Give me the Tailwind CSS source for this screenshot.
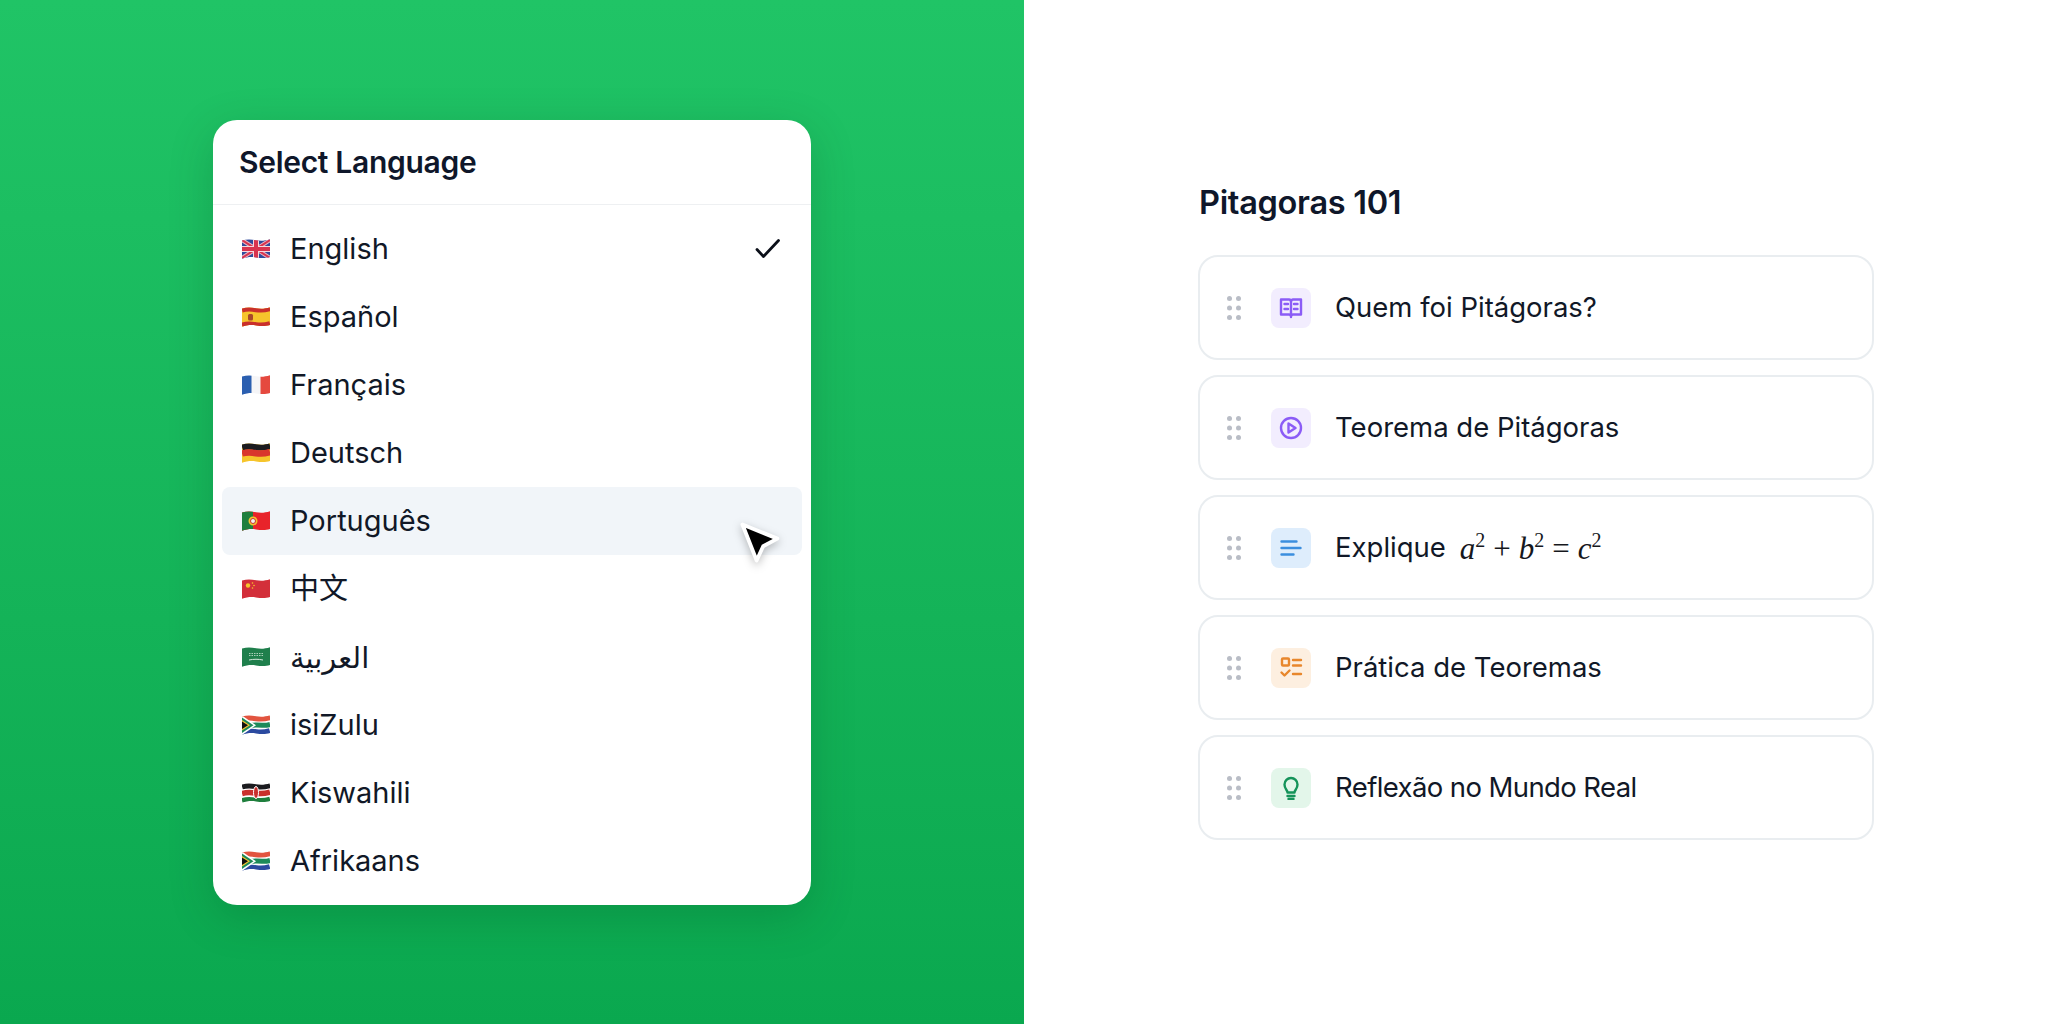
<!DOCTYPE html>
<html lang="en">
<head>
    <meta charset="UTF-8">
    <title>Select Language / Pitagoras 101</title>
    <script src="https://cdn.jsdelivr.net/npm/@tailwindcss/browser@4"></script>
</head>
<body class="bg-white font-['Inter','Noto_Sans_CJK_SC','Noto_Sans',sans-serif] text-[#111827]">

    <!-- shared flag shapes -->
    <svg class="block w-0 h-0" aria-hidden="true">
        <defs>
            <clipPath id="wave"><path d="M0 1.500C5 0 9 .3 14 1.200s9 .5 14-1V18c-5 1.500-9 1-14 .4s-9-.3-14 1.400Z"/></clipPath>
            <symbol id="flag-za" viewBox="0 0 28 20">
                <g clip-path="url(#wave)">
                    <rect width="28" height="20" fill="#fff"/>
                    <path d="M0 3C5 1.500 9 1.800 14 2.700S23 3.200 28 1.700" stroke="#e2543f" stroke-width="7" fill="none"/>
                    <path d="M0 18C5 16.500 9 16.800 14 17.700S23 18.200 28 16.700" stroke="#2b4aa0" stroke-width="7" fill="none"/>
                    <path d="M8 10.500C12 9.800 16 9.800 20 10.200S25 10.200 28 9.500" stroke="#1d8a5a" stroke-width="5" fill="none"/>
                    <path d="M0 .5 14 10.300 0 20Z" fill="#fff"/>
                    <path d="M0 2.500 11.500 10.300 0 18Z" fill="#1d8a5a"/>
                    <path d="M0 5 8 10.300 0 15.500Z" fill="#f4c430"/>
                    <path d="M0 6.500 6 10.300 0 14Z" fill="#111"/>
                </g>
            </symbol>
        </defs>
    </svg>

    <div class="flex h-[1024px] w-[2048px] overflow-hidden">

        <!-- left panel -->
        <section class="flex w-[1024px] items-center justify-center bg-gradient-to-b from-[#20c466] to-[#0aa84f]">
            <div class="relative w-[598px] rounded-[24px] bg-white shadow-[0_12px_44px_rgba(0,70,30,0.22)]">
                <header class="flex h-[85px] items-center border-b border-[#eef0f2] pl-[26px] pt-[1px]">
                    <h1 class="text-[30px] font-semibold tracking-[-0.3px] text-[#0f172a]">Select Language</h1>
                </header>
                <ul class="px-[9px] py-[10px]">
                    <li class="flex h-[68px] items-center gap-[20px] rounded-lg px-[20px] text-[29px] text-[#111827]">
                        <svg class="w-[28px] h-[20px] shrink-0" viewBox="0 0 28 20"><g clip-path="url(#wave)">
                            <rect width="28" height="20" fill="#2f4a9b"/>
                            <path d="M0 1 28 19M28 1 0 19" stroke="#e8b4c0" stroke-width="4"/>
                            <path d="M0 1 28 19M28 1 0 19" stroke="#d8344f" stroke-width="2"/>
                            <path d="M14 0V20M0 10H28" stroke="#f4d8de" stroke-width="6"/>
                            <path d="M14 0V20M0 10H28" stroke="#d8344f" stroke-width="4"/>
                        </g></svg>
                        <span class="flex-1">English</span>
                        <svg class="mr-[1px] w-[28px] h-[22px]" viewBox="0 0 28 22" fill="none" stroke="#0b0f19" stroke-width="2.800" stroke-linecap="round" stroke-linejoin="round"><path d="M4 11.500 10.500 18.500 25.500 2.500"/></svg>
                    </li>
                    <li class="flex h-[68px] items-center gap-[20px] rounded-lg px-[20px] text-[29px] text-[#111827]">
                        <svg class="w-[28px] h-[20px] shrink-0" viewBox="0 0 28 20"><g clip-path="url(#wave)">
                            <rect width="28" height="20" fill="#f6c52c"/>
                            <path d="M0 3C5 1.500 9 1.800 14 2.700S23 3.200 28 1.700" stroke="#c9302c" stroke-width="5" fill="none"/>
                            <path d="M0 18C5 16.500 9 16.800 14 17.700S23 18.200 28 16.700" stroke="#c9302c" stroke-width="5" fill="none"/>
                            <rect x="6" y="7" width="5" height="6.500" rx="1.500" fill="#a8482a"/>
                        </g></svg>
                        <span>Español</span>
                    </li>
                    <li class="flex h-[68px] items-center gap-[20px] rounded-lg px-[20px] text-[29px] text-[#111827]">
                        <svg class="w-[28px] h-[20px] shrink-0" viewBox="0 0 28 20"><g clip-path="url(#wave)">
                            <rect width="28" height="20" fill="#f5f5f7"/>
                            <rect width="9.500" height="20" fill="#2b5fb0"/>
                            <rect x="18.500" width="9.500" height="20" fill="#e5493f"/>
                        </g></svg>
                        <span>Français</span>
                    </li>
                    <li class="flex h-[68px] items-center gap-[20px] rounded-lg px-[20px] text-[29px] text-[#111827]">
                        <svg class="w-[28px] h-[20px] shrink-0" viewBox="0 0 28 20"><g clip-path="url(#wave)">
                            <rect width="28" height="20" fill="#f6c52c"/>
                            <path d="M0 4C5 2.500 9 2.800 14 3.700S23 4.200 28 2.700" stroke="#1b1b1f" stroke-width="7" fill="none"/>
                            <path d="M0 10.500C5 9 9 9.300 14 10.200S23 10.700 28 9.200" stroke="#d9352c" stroke-width="6.500" fill="none"/>
                        </g></svg>
                        <span>Deutsch</span>
                    </li>
                    <li class="flex h-[68px] items-center gap-[20px] rounded-lg bg-[#f1f5f9] px-[20px] text-[29px] text-[#111827]">
                        <svg class="w-[28px] h-[20px] shrink-0" viewBox="0 0 28 20"><g clip-path="url(#wave)">
                            <rect width="28" height="20" fill="#e8232a"/>
                            <rect width="11" height="20" fill="#1f7f3d"/>
                            <circle cx="11" cy="10" r="4.500" fill="#f2c230"/>
                            <circle cx="11" cy="10" r="2.500" fill="#f4f4f4" stroke="#c9302c"/>
                        </g></svg>
                        <span>Português</span>
                    </li>
                    <li class="flex h-[68px] items-center gap-[20px] rounded-lg px-[20px] text-[29px] text-[#111827]">
                        <svg class="w-[28px] h-[20px] shrink-0" viewBox="0 0 28 20"><g clip-path="url(#wave)">
                            <rect width="28" height="20" fill="#d32f3a"/>
                            <circle cx="6" cy="6.500" r="2.200" fill="#f6c52c"/>
                            <circle cx="10.500" cy="4" r=".8" fill="#f6c52c"/>
                            <circle cx="12" cy="6.500" r=".8" fill="#f6c52c"/>
                            <circle cx="10.500" cy="9" r=".8" fill="#f6c52c"/>
                        </g></svg>
                        <span>中文</span>
                    </li>
                    <li class="flex h-[68px] items-center gap-[20px] rounded-lg px-[20px] text-[29px] text-[#111827]">
                        <svg class="w-[28px] h-[20px] shrink-0" viewBox="0 0 28 20"><g clip-path="url(#wave)">
                            <rect width="28" height="20" fill="#1f7f4c"/>
                            <path d="M7 6.500h14M7 8.500h14" stroke="#a9d0b8" stroke-width="1.200" stroke-dasharray="1.500 1"/>
                            <path d="M7 13c5-1 9-1 14 0" stroke="#d5e8dc" stroke-width="1" fill="none"/>
                        </g></svg>
                        <span class="font-['Noto_Sans','DejaVu_Sans',sans-serif]">العربية</span>
                    </li>
                    <li class="flex h-[68px] items-center gap-[20px] rounded-lg px-[20px] text-[29px] text-[#111827]">
                        <svg class="w-[28px] h-[20px] shrink-0"><use href="#flag-za"/></svg>
                        <span>isiZulu</span>
                    </li>
                    <li class="flex h-[68px] items-center gap-[20px] rounded-lg px-[20px] text-[29px] text-[#111827]">
                        <svg class="w-[28px] h-[20px] shrink-0" viewBox="0 0 28 20"><g clip-path="url(#wave)">
                            <rect width="28" height="20" fill="#fff"/>
                            <path d="M0 3.500C5 2 9 2.300 14 3.200S23 3.700 28 2.200" stroke="#1b1b1f" stroke-width="6" fill="none"/>
                            <path d="M0 10.500C5 9 9 9.300 14 10.200S23 10.700 28 9.200" stroke="#c9302c" stroke-width="5.500" fill="none"/>
                            <path d="M0 17.500C5 16 9 16.300 14 17.200S23 17.700 28 16.200" stroke="#1f7f3d" stroke-width="5" fill="none"/>
                            <ellipse cx="14" cy="9.500" rx="2.500" ry="6" fill="#c9302c" stroke="#fff"/>
                        </g></svg>
                        <span>Kiswahili</span>
                    </li>
                    <li class="flex h-[68px] items-center gap-[20px] rounded-lg px-[20px] text-[29px] text-[#111827]">
                        <svg class="w-[28px] h-[20px] shrink-0"><use href="#flag-za"/></svg>
                        <span>Afrikaans</span>
                    </li>
                </ul>

                <!-- pointer over the hovered row -->
                <svg class="absolute left-[524px] top-[399px] w-[48px] h-[48px] drop-shadow-[0_3px_4px_rgba(0,0,0,0.25)]" viewBox="0 0 44 44">
                    <path d="M5 5 37 18 24 25 18 38Z" fill="#000" stroke="#fff" stroke-width="3.500" stroke-linejoin="round"/>
                </svg>
            </div>
        </section>

        <!-- right panel -->
        <section class="flex w-[1024px] items-center justify-center bg-white">
            <div class="w-[676px]">
                <h2 class="mb-[34px] ml-[1px] h-[36px] text-[32.500px] leading-[36px] font-semibold tracking-[-0.3px] text-[#0f172a]">Pitagoras 101</h2>
                <div class="flex flex-col gap-[15px]">
                    <div class="flex h-[105px] items-center rounded-[20px] border-2 border-[#e9edf0] pl-[27px] pt-[2px]">
                        <svg class="w-[14px] h-[24px] shrink-0" viewBox="0 0 14 24" fill="#b9bdc6"><circle cx="2.500" cy="2.500" r="2.500"/><circle cx="11.500" cy="2.500" r="2.500"/><circle cx="2.500" cy="12" r="2.500"/><circle cx="11.500" cy="12" r="2.500"/><circle cx="2.500" cy="21.500" r="2.500"/><circle cx="11.500" cy="21.500" r="2.500"/></svg>
                        <div class="ml-[30px] flex h-[40px] w-[40px] items-center justify-center rounded-lg bg-[#f2edfe]">
                            <svg class="w-[24px] h-[24px]" viewBox="0 0 24 24" fill="none" stroke="#8b5cf6" stroke-width="2.400" stroke-linejoin="round" stroke-linecap="round"><path d="M2 3.500h8c1 0 2 .8 2 2 0-1.200 1-2 2-2h8v15h-8c-1 0-2 .5-2 1.500 0-1-1-1.500-2-1.500H2Z"/><path d="M12 5.500V21M5.500 8H9M5.500 13H9M15 8h3.500M15 13h3.500"/></svg>
                        </div>
                        <span class="ml-[24px] text-[27.500px]">Quem foi Pitágoras?</span>
                    </div>
                    <div class="flex h-[105px] items-center rounded-[20px] border-2 border-[#e9edf0] pl-[27px] pt-[2px]">
                        <svg class="w-[14px] h-[24px] shrink-0" viewBox="0 0 14 24" fill="#b9bdc6"><circle cx="2.500" cy="2.500" r="2.500"/><circle cx="11.500" cy="2.500" r="2.500"/><circle cx="2.500" cy="12" r="2.500"/><circle cx="11.500" cy="12" r="2.500"/><circle cx="2.500" cy="21.500" r="2.500"/><circle cx="11.500" cy="21.500" r="2.500"/></svg>
                        <div class="ml-[30px] flex h-[40px] w-[40px] items-center justify-center rounded-lg bg-[#f2edfe]">
                            <svg class="w-[24px] h-[24px]" viewBox="0 0 24 24" fill="none" stroke="#8b5cf6" stroke-width="2.400" stroke-linejoin="round"><circle cx="12" cy="12" r="10"/><path d="M9.500 7.500 16.500 12 9.500 16.500Z"/></svg>
                        </div>
                        <span class="ml-[24px] text-[27.500px]">Teorema de Pitágoras</span>
                    </div>
                    <div class="flex h-[105px] items-center rounded-[20px] border-2 border-[#e9edf0] pl-[27px] pt-[2px]">
                        <svg class="w-[14px] h-[24px] shrink-0" viewBox="0 0 14 24" fill="#b9bdc6"><circle cx="2.500" cy="2.500" r="2.500"/><circle cx="11.500" cy="2.500" r="2.500"/><circle cx="2.500" cy="12" r="2.500"/><circle cx="11.500" cy="12" r="2.500"/><circle cx="2.500" cy="21.500" r="2.500"/><circle cx="11.500" cy="21.500" r="2.500"/></svg>
                        <div class="ml-[30px] flex h-[40px] w-[40px] items-center justify-center rounded-lg bg-[#deedfc]">
                            <svg class="w-[24px] h-[24px]" viewBox="0 0 24 24" fill="none" stroke="#3b8ede" stroke-width="2.400" stroke-linecap="round"><path d="M2.500 5.500h15M2.500 12h19M2.500 18.500h12"/></svg>
                        </div>
                        <span class="ml-[24px] text-[27.500px]">Explique</span>
                        <span class="ml-[14px] flex items-baseline font-['Liberation_Serif',serif] text-[31px] leading-none whitespace-nowrap text-[#16181d]">
                            <i>a</i><span class="relative -top-[12px] text-[20px]">2</span>
                            <span class="mx-[8px]">+</span>
                            <i>b</i><span class="relative -top-[12px] text-[20px]">2</span>
                            <span class="mx-[8px]">=</span>
                            <i>c</i><span class="relative -top-[12px] text-[20px]">2</span>
                        </span>
                    </div>
                    <div class="flex h-[105px] items-center rounded-[20px] border-2 border-[#e9edf0] pl-[27px] pt-[2px]">
                        <svg class="w-[14px] h-[24px] shrink-0" viewBox="0 0 14 24" fill="#b9bdc6"><circle cx="2.500" cy="2.500" r="2.500"/><circle cx="11.500" cy="2.500" r="2.500"/><circle cx="2.500" cy="12" r="2.500"/><circle cx="11.500" cy="12" r="2.500"/><circle cx="2.500" cy="21.500" r="2.500"/><circle cx="11.500" cy="21.500" r="2.500"/></svg>
                        <div class="ml-[30px] flex h-[40px] w-[40px] items-center justify-center rounded-lg bg-[#fdefe0]">
                            <svg class="w-[24px] h-[24px]" viewBox="0 0 24 24" fill="none" stroke="#e8872c" stroke-width="2.400" stroke-linecap="round" stroke-linejoin="round"><rect x="3" y="2.500" width="7" height="7" rx="1"/><path d="M14 4h8M14 9.500h8M14 18h8M2.500 16.500l3 3 5-5"/></svg>
                        </div>
                        <span class="ml-[24px] text-[27.500px]">Prática de Teoremas</span>
                    </div>
                    <div class="flex h-[105px] items-center rounded-[20px] border-2 border-[#e9edf0] pl-[27px] pt-[2px]">
                        <svg class="w-[14px] h-[24px] shrink-0" viewBox="0 0 14 24" fill="#b9bdc6"><circle cx="2.500" cy="2.500" r="2.500"/><circle cx="11.500" cy="2.500" r="2.500"/><circle cx="2.500" cy="12" r="2.500"/><circle cx="11.500" cy="12" r="2.500"/><circle cx="2.500" cy="21.500" r="2.500"/><circle cx="11.500" cy="21.500" r="2.500"/></svg>
                        <div class="ml-[30px] flex h-[40px] w-[40px] items-center justify-center rounded-lg bg-[#e3f6ea]">
                            <svg class="w-[24px] h-[24px]" viewBox="0 0 24 24" fill="none" stroke="#15935a" stroke-width="2.400" stroke-linecap="round" stroke-linejoin="round"><path d="M8.500 16.500c0-2.500-3-3.500-3-8a6.500 6.500 0 0 1 13 0c0 4.500-3 5.500-3 8Z"/><path d="M8.500 20h7M9.500 23h5"/></svg>
                        </div>
                        <span class="ml-[24px] text-[27.500px] tracking-[-0.6px]">Reflexão no Mundo Real</span>
                    </div>
                </div>
            </div>
        </section>
    </div>
</body>
</html>
